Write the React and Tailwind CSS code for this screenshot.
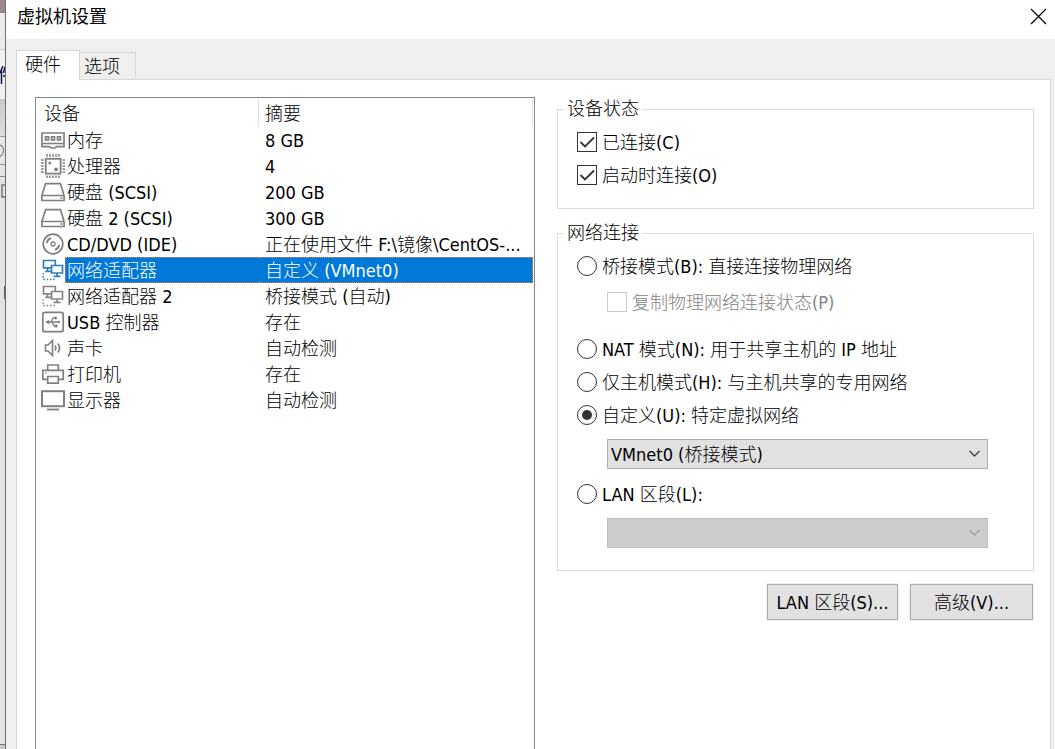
import React, { useState } from "react";

const ICON = { width: 24, height: 24, viewBox: "0 0 24 24", fill: "none", "aria-hidden": true };

function MemoryIcon() {
  return (
    <svg {...ICON} stroke="#808080">
      <path d="M1 5H23V18.700H15.500L14 20H10L8.500 18.700H1Z" strokeWidth="1.700" />
      <path d="M1 15.500H23" strokeWidth="1.600" />
      <path d="M4.500 8.800H7.500V11.800H4.500ZM10.500 8.800H13.500V11.800H10.500ZM16.500 8.800H19.500V11.800H16.500Z" strokeWidth="1.700" />
    </svg>
  );
}
function CpuIcon() {
  return (
    <svg {...ICON} stroke="#808080">
      <rect x="4.800" y="4.800" width="14.800" height="14.800" strokeWidth="1.800" />
      <path d="M6 0V2.700M9 0V2.700M12 0V2.700M15 0V2.700M18 0V2.700M6 21.500V24M9 21.500V24M12 21.500V24M15 21.500V24M18 21.500V24M0 6H2.700M0 9H2.700M0 12H2.700M0 15H2.700M0 18H2.700M21.500 6H24M21.500 9H24M21.500 12H24M21.500 15H24M21.500 18H24" strokeWidth="1.500" />
      <circle cx="8.800" cy="9" r="1.500" fill="#808080" stroke="none" />
      <circle cx="15" cy="15.300" r="1.900" fill="#808080" stroke="none" />
    </svg>
  );
}
function DiskIcon() {
  return (
    <svg {...ICON} stroke="#808080" strokeWidth="1.700" strokeLinejoin="round">
      <path d="M4.500 3.700H19.500L23.100 15.500V20.500H0.900V15.500Z" />
      <path d="M0.900 15.500H23.100M19.300 18H21.500" />
    </svg>
  );
}
function DiscIcon() {
  return (
    <svg {...ICON} stroke="#808080" strokeWidth="1.700">
      <circle cx="12" cy="12" r="9.800" />
      <circle cx="12" cy="12" r="2" strokeWidth="1.300" />
      <path d="M5.800 11A6.300 6.300 0 0 1 10 6.200M18.200 13A6.300 6.300 0 0 1 14 17.800" strokeWidth="1.900" />
    </svg>
  );
}
function NetworkIcon({ active }) {
  return (
    <svg {...ICON} stroke={active ? "#2f7fb8" : "#858585"} strokeWidth="1.700">
      <path d="M10 9.800H2.500V2.500H14.300V7M6.500 9.800V13.300M4.300 13.300H10" />
      <path d="M10.500 7.500H21.500V15H10.500ZM16 15V18.300M12.500 18.300H19.500" />
      <path d="M2.200 15V21.500H15" strokeDasharray="1.600 1.700" strokeWidth="1.300" />
    </svg>
  );
}
function UsbIcon() {
  return (
    <svg {...ICON} stroke="#808080" strokeWidth="1.700">
      <rect x="1.800" y="2.300" width="20.400" height="19.400" rx="2" />
      <path d="M5 12H18.500M9 12C11.500 12 10.500 8 12.500 8H14M10.500 12C12.500 12 11.500 16 13.500 16H15" strokeWidth="1.300" />
      <path d="M8 9.700V14.300L4.500 12Z" fill="#808080" stroke="none" />
      <circle cx="14.700" cy="8" r="1.400" fill="#808080" stroke="none" />
      <path d="M13.700 14.600H16.500V17.400H13.700ZM17 10.500L19.800 12L17 13.500Z" fill="#808080" stroke="none" />
    </svg>
  );
}
function SoundIcon() {
  return (
    <svg {...ICON} stroke="#808080" strokeWidth="1.600">
      <path d="M4.500 9H7L11.500 4.500V19.500L7 15H4.500Z" />
      <path d="M14 9.500Q15.800 12 14 14.500M16.700 7.500Q20.500 12 16.700 16.500" />
    </svg>
  );
}
function PrinterIcon() {
  return (
    <svg {...ICON} stroke="#808080" strokeWidth="1.700">
      <path d="M6.700 8V3H17.300V8M6.700 17.300H1.800V8.300H22.200V17.300H17.300" />
      <path d="M6.700 14.500H17.300V21.200H6.700Z" />
      <path d="M4.300 11H5.700" />
    </svg>
  );
}
function DisplayIcon() {
  return (
    <svg {...ICON} stroke="#808080">
      <rect x="1" y="3.200" width="22" height="15" strokeWidth="2" />
      <path d="M6 21.500H18" strokeWidth="1.800" />
    </svg>
  );
}

const DEVICES = [
  { name: "内存", summary: "8 GB", Icon: MemoryIcon },
  { name: "处理器", summary: "4", Icon: CpuIcon },
  { name: "硬盘 (SCSI)", summary: "200 GB", Icon: DiskIcon },
  { name: "硬盘 2 (SCSI)", summary: "300 GB", Icon: DiskIcon },
  { name: "CD/DVD (IDE)", summary: "正在使用文件 F:\\镜像\\CentOS-...", Icon: DiscIcon },
  { name: "网络适配器", summary: "自定义 (VMnet0)", Icon: NetworkIcon },
  { name: "网络适配器 2", summary: "桥接模式 (自动)", Icon: NetworkIcon },
  { name: "USB 控制器", summary: "存在", Icon: UsbIcon },
  { name: "声卡", summary: "自动检测", Icon: SoundIcon },
  { name: "打印机", summary: "存在", Icon: PrinterIcon },
  { name: "显示器", summary: "自动检测", Icon: DisplayIcon },
];

function DeviceTable() {
  const [selected, setSelected] = useState(5);
  return (
    <div className="border border-b-0 border-[#828790] pr-px">
      <table className="w-full table-fixed border-collapse text-left">
        <colgroup>
          <col className="w-[223px]" />
          <col />
        </colgroup>
        <thead>
          <tr className="h-[29px]">
            <th className="p-0 font-light">
              <div className="h-[27px] border-r border-[#e2e2e2] pl-2 leading-[30px]">设备</div>
            </th>
            <th className="p-0 font-light">
              <div className="h-[27px] border-r border-[#e2e2e2] pl-[6px] leading-[30px]">摘要</div>
            </th>
          </tr>
        </thead>
        <tbody>
          {DEVICES.map(({ name, summary, Icon }, i) => {
            const on = i === selected;
            return (
              <tr key={name} className="h-[26px] cursor-default" aria-selected={on} onClick={() => setSelected(i)}>
                <td className="p-0">
                  <div className="flex h-[26px] items-center pl-[5px]">
                    <Icon active={on} />
                    <span
                      className={
                        on
                          ? "h-[26px] flex-1 border border-r-0 border-dotted border-[#e0873a] bg-[#0078d7] pl-px leading-[26px] text-white"
                          : "h-[26px] flex-1 border border-r-0 border-transparent pl-px leading-[26px]"
                      }
                    >
                      {name}
                    </span>
                  </div>
                </td>
                <td className="p-0">
                  <div
                    className={
                      on
                        ? "h-[26px] whitespace-nowrap border border-l-0 border-dotted border-[#e0873a] bg-[#0078d7] pl-[6px] leading-[26px] text-white"
                        : "h-[26px] whitespace-nowrap border border-l-0 border-transparent pl-[6px] leading-[26px]"
                    }
                  >
                    {summary}
                  </div>
                </td>
              </tr>
            );
          })}
        </tbody>
      </table>
    </div>
  );
}

function Check({ label, disabled, defaultChecked }) {
  return (
    <label className={disabled ? "flex h-6 items-center gap-[5px] text-[#838383]" : "flex h-6 items-center gap-[5px]"}>
      <span className="relative flex">
        <input
          type="checkbox"
          defaultChecked={defaultChecked}
          disabled={disabled}
          className="peer size-5 appearance-none border border-[#333333] bg-white disabled:border-[#cccccc]"
        />
        <svg
          className="pointer-events-none absolute inset-0 hidden peer-checked:block"
          width="20"
          height="20"
          viewBox="0 0 20 20"
          fill="none"
          stroke="#333333"
          strokeWidth="1.800"
          aria-hidden="true"
        >
          <path d="M3.500 10L8 14.500L17 5.500" />
        </svg>
      </span>
      <span className="pt-0.5">{label}</span>
    </label>
  );
}

function Radio({ label, value, mode, onPick }) {
  return (
    <label className="flex h-6 items-center gap-[5px]">
      <input
        type="radio"
        name="connection"
        checked={mode === value}
        onChange={() => onPick(value)}
        className="grid size-5 shrink-0 appearance-none place-items-center rounded-full border border-[#333333] bg-white before:size-[10px] before:rounded-full checked:before:bg-[#333333]"
      />
      <span className="pt-0.5">{label}</span>
    </label>
  );
}

function Dropdown({ label, disabled, children }) {
  return (
    <div className="relative ml-[30px] mr-[26px]">
      <select
        aria-label={label}
        disabled={disabled}
        className="block h-[30px] w-full appearance-none border border-[#adadad] bg-[#e1e1e1] pl-[3px] pr-7 pt-0.5 text-black disabled:border-[#bfbfbf] disabled:bg-[#cccccc] disabled:opacity-100"
      >
        {children}
      </select>
      <svg
        className="pointer-events-none absolute right-[7px] top-[9px]"
        width="13"
        height="12"
        viewBox="0 0 13 12"
        fill="none"
        stroke={disabled ? "#a0a0a0" : "#444444"}
        strokeWidth="1.300"
        aria-hidden="true"
      >
        <path d="M1.500 3L6.500 8L11.500 3" />
      </svg>
    </div>
  );
}

function Group({ title, children }) {
  return (
    <fieldset className="min-w-0 border border-[#dcdcdc] pl-[19px] pr-[19px]">
      <legend className="-ml-[13px] px-[3px] leading-6">{title}</legend>
      {children}
    </fieldset>
  );
}

function WindowBehind() {
  return (
    <div className="flex w-[6px] shrink-0 flex-col overflow-hidden border-r border-[#707070] bg-[#e3e3e3]" aria-hidden="true">
      <div className="h-[13px] bg-[#9c8790]" />
      <div className="h-9 bg-[#ececec]" />
      <div className="flex h-[50px] items-center justify-end border-t border-[#cfcfcf] bg-[#f0f0f0]">
        <svg width="5" height="20" viewBox="0 0 5 20" fill="none" stroke="#10104a" strokeWidth="1.500">
          <path d="M3 1L0 8M1.500 6V19M5 2L3.500 8M3 11H5" />
        </svg>
      </div>
      <div className="h-[37px] bg-gradient-to-b from-[#c9cacc] to-[#dcdcdc]" />
      <div className="flex h-[29px] items-center border-y border-[#9a9a9a] bg-[#e6e6e6]">
        <svg width="5" height="16" viewBox="0 0 5 16" fill="none" stroke="#8a8a8a" strokeWidth="1.300">
          <path d="M-1 2Q4 3 3.500 8Q3 12 -1 14" />
        </svg>
      </div>
      <div className="h-3 border-b border-[#85878c]" />
      <div className="flex-1 pt-[7px]">
        <svg width="5" height="14" viewBox="0 0 5 14" fill="none" stroke="#777777" strokeWidth="1.500">
          <path d="M5 1H2V13H5" />
        </svg>
        <div className="ml-1 mt-[88px] h-[13px] bg-[#606060]" />
      </div>
      <div className="h-[5px] border-t border-[#70747c] bg-[#c9cacc]" />
    </div>
  );
}

export default function App() {
  const [tab, setTab] = useState("hardware");
  const [mode, setMode] = useState("custom");
  return (
    <div className="flex h-screen overflow-hidden bg-white font-['DejaVu_Sans_Condensed','Noto_Sans_CJK_SC',sans-serif] text-[18px] font-light leading-6 text-black">
      <WindowBehind />
      <main className="flex min-w-0 flex-1 flex-col bg-[#efefef]">
        <header className="flex h-[39px] shrink-0 items-center justify-between bg-white pl-[11px] pr-2">
          <h1 className="pb-[6px] font-normal">虚拟机设置</h1>
          <button type="button" aria-label="关闭" className="pb-[6px]">
            <svg width="17" height="17" viewBox="0 0 17 17" stroke="#000000" strokeWidth="1.200" aria-hidden="true">
              <path d="M1 1L16 16M16 1L1 16" />
            </svg>
          </button>
        </header>
        <div role="tablist" className="flex items-end pl-[10px] pt-[11px]">
          <button
            type="button"
            role="tab"
            aria-selected={tab === "hardware"}
            onClick={() => setTab("hardware")}
            className="z-10 -mb-px flex h-[30px] w-16 items-center border border-b-0 border-[#d9d9d9] bg-white pb-0.5 pl-2"
          >
            硬件
          </button>
          <button
            type="button"
            role="tab"
            aria-selected={tab === "options"}
            onClick={() => setTab("options")}
            className="flex h-[27px] w-14 items-center border border-b-0 border-l-0 border-[#d9d9d9] bg-[#efefef] pl-1 pt-0.5"
          >
            选项
          </button>
        </div>
        <section className="mr-1 ml-[10px] grid min-h-0 flex-1 grid-cols-[500fr_477fr] gap-x-[22px] border border-b-0 border-[#d9d9d9] bg-white pl-[18px] pr-4 pt-[17px]">
          <DeviceTable />
          <div className="flex min-w-0 flex-col gap-3">
            <Group title="设备状态">
              <div className="flex flex-col gap-[9px] pb-[21px] pt-[9px]">
                <Check label="已连接(C)" defaultChecked />
                <Check label="启动时连接(O)" defaultChecked />
              </div>
            </Group>
            <Group title="网络连接">
              <div className="flex flex-col gap-[9px] pb-[22px] pt-[9px]">
                <div className="flex flex-col gap-3 pb-[14px]">
                  <Radio label="桥接模式(B): 直接连接物理网络" value="bridged" mode={mode} onPick={setMode} />
                  <div className="pl-[30px]">
                    <Check label="复制物理网络连接状态(P)" disabled />
                  </div>
                </div>
                <Radio label="NAT 模式(N): 用于共享主机的 IP 地址" value="nat" mode={mode} onPick={setMode} />
                <Radio label="仅主机模式(H): 与主机共享的专用网络" value="host" mode={mode} onPick={setMode} />
                <div className="flex flex-col gap-[13px]">
                  <div className="flex flex-col gap-3">
                    <Radio label="自定义(U): 特定虚拟网络" value="custom" mode={mode} onPick={setMode} />
                    <Dropdown label="特定虚拟网络">
                      <option>VMnet0 (桥接模式)</option>
                    </Dropdown>
                  </div>
                  <div className="flex flex-col gap-3">
                    <Radio label="LAN 区段(L):" value="lan" mode={mode} onPick={setMode} />
                    <Dropdown label="LAN 区段" disabled />
                  </div>
                </div>
              </div>
            </Group>
            <div className="flex justify-end gap-3 pr-px pt-px">
              <button type="button" className="h-9 w-[131px] border border-[#adadad] bg-[#e1e1e1] pt-0.5 outline outline-[#f0f0f0]">
                LAN 区段(S)...
              </button>
              <button type="button" className="h-9 w-[123px] border border-[#adadad] bg-[#e1e1e1] pt-0.5 outline outline-[#f0f0f0]">
                高级(V)...
              </button>
            </div>
          </div>
        </section>
      </main>
    </div>
  );
}
